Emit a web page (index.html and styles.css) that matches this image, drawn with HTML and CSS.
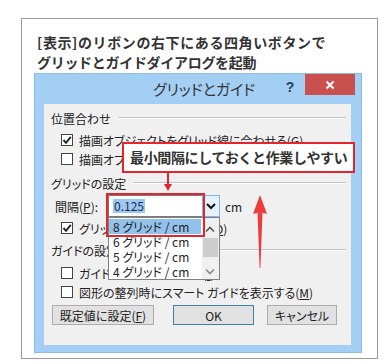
FILE: index.html
```html
<!DOCTYPE html>
<html>
<head>
  <title>グリッドとガイド</title>
  <link rel="stylesheet" href="styles.css">
</head>
<body>
  <div class="frame">
    <h1 class="lead">
      <span class="lead-1">[表示]のリボンの右下にある四角いボタンで</span>
      <span class="lead-2">グリッドとガイドダイアログを起動</span>
    </h1>

    <div class="dialog">
      <div class="titlebar">
        <span class="title">グリッドとガイド</span>
        <span class="help">?</span>
        <span class="close">
          <svg width="10" height="10" viewBox="0 0 10 10"><path d="M1.5 1.5 L8.5 8.5 M8.5 1.5 L1.5 8.5" stroke="#fff" stroke-width="2"/></svg>
        </span>
      </div>

      <div class="panel">
        <div class="group">位置合わせ</div>
        <div class="row r1"><span class="box on"><svg width="10" height="10" viewBox="0 0 10 10"><path d="M1.5 5 L4 7.8 L8.8 1.8" fill="none" stroke="#222" stroke-width="1.9"/></svg></span>描画オブジェクトをグリッド線に合わせる(<u>G</u>)</div>
        <div class="row r2"><span class="box"></span>描画オブジェクトを他のオブジェクトに合わせる(<u>O</u>)</div>

        <div class="group g2">グリッドの設定</div>
        <div class="field">
          <span class="field-label">間隔(<u>P</u>):</span>
          <div class="combo">
            <div class="combo-input"><span class="sel">0.125</span></div>
            <div class="combo-btn">
              <svg width="10" height="8" viewBox="0 0 10 8"><path d="M1 2 L5 6 L9 2" fill="none" stroke="#111" stroke-width="2"/></svg>
            </div>
            <ul class="list">
              <li class="hot">8 グリッド / cm</li>
              <li>6 グリッド / cm</li>
              <li>5 グリッド / cm</li>
              <li>4 グリッド / cm</li>
              <li class="scroll">
                <svg class="up" width="10" height="7" viewBox="0 0 10 7"><path d="M1 5.5 L5 1.5 L9 5.5" fill="none" stroke="#555" stroke-width="1.6"/></svg>
                <span class="thumb"></span>
                <svg class="down" width="10" height="7" viewBox="0 0 10 7"><path d="M1 1.5 L5 5.5 L9 1.5" fill="none" stroke="#888" stroke-width="1.6"/></svg>
              </li>
            </ul>
            <div class="mark"></div>
          </div>
          <span class="unit">cm</span>
        </div>
        <div class="row r3"><span class="box on"><svg width="10" height="10" viewBox="0 0 10 10"><path d="M1.5 5 L4 7.8 L8.8 1.8" fill="none" stroke="#222" stroke-width="1.9"/></svg></span>グリッドを画面に表示する(<u>D</u>)</div>

        <div class="group g3">ガイドの設定</div>
        <div class="row r4"><span class="box"></span>ガイドを画面に表示する(<u>I</u>)</div>
        <div class="row r5"><span class="box"></span>図形の整列時にスマート ガイドを表示する(<u>M</u>)</div>

        <div class="buttons">
          <button class="btn btn-default-set">既定値に設定(<u>F</u>)</button>
          <button class="btn btn-ok">OK</button>
          <button class="btn btn-cancel">キャンセル</button>
        </div>
      </div>
    </div>

    <!-- annotations drawn over the screenshot -->
    <div class="callout">最小間隔にしておくと作業しやすい</div>
    <svg class="arrow-down" width="10" height="19" viewBox="0 0 10 19">
      <path d="M5 0 L5 12" stroke="#e3262b" stroke-width="2"/>
      <path d="M1 11 L9 11 L5 18 Z" fill="#e3262b"/>
    </svg>
    <svg class="arrow-up" width="16" height="75" viewBox="0 0 16 75">
      <path d="M8 1 L15 20 Q8 17.5 1 20 Z" fill="#ee3b3e"/>
      <path d="M5.5 18.5 L10.5 18.5 L8.4 74 L7.6 74 Z" fill="#ee3b3e"/>
    </svg>
  </div>
</body>
</html>
```

FILE: styles.css
```css
* {
  box-sizing: border-box;
}

body {
  margin: 0;
  background: #fff;
  font-family: "Noto Sans CJK JP", "Noto Sans", sans-serif;
  color: #222;
}

.frame {
  position: relative;
  margin: 18px 0 0 21px;
  width: 357px;
  height: 341px;
  border: 1px solid #9a9a9a;
}

.lead {
  margin: 0;
  padding: 13px 0 0 15px;
  font-size: 14px;
  line-height: 20px;
  font-weight: bold;
  color: #333;
}

.lead-1,
.lead-2 {
  display: block;
  white-space: nowrap;
}

.lead-1 { letter-spacing: 0.6px; }
.lead-2 { letter-spacing: -0.3px; }

/* dialog window */
.dialog {
  margin: 1px 0 0 12px;
  width: 328px;
  height: 280px;
  background: #a3cff5;
  border: 1px solid #8bbbe6;
  display: flex;
  flex-direction: column;
}

.titlebar {
  height: 30px;
  display: flex;
  align-items: flex-start;
  flex: none;
}

.title {
  flex: 1;
  padding: 5px 0 0 118px;
  font-size: 15px;
  line-height: 20px;
  color: #333;
  font-feature-settings: "palt";
}

.help {
  width: 12px;
  margin: 3px 9px 0 0;
  font: bold 14px/20px "Liberation Sans", sans-serif;
  color: #24405e;
  text-align: center;
}

.close {
  width: 50px;
  height: 21px;
  margin-right: 6px;
  background: #c9504d;
  display: flex;
  align-items: center;
  justify-content: center;
}

.panel {
  flex: 1;
  margin: 0 10px 7px 9px;
  padding-top: 4px;
  background: #f0f0f0;
  font-size: 12px;
  font-feature-settings: "palt";
  color: #222;
}

.group {
  display: flex;
  align-items: center;
  height: 20px;
  padding-left: 7px;
  white-space: nowrap;
}

.group::after {
  content: "";
  flex: 1;
  margin: 0 5px 0 7px;
  border-top: 1px solid #c4c4c4;
  border-bottom: 1px solid #fff;
}

.g2 { margin-top: 5px; }
.g3 { margin-top: 3px; }

.row {
  display: flex;
  align-items: center;
  height: 18px;
  padding-left: 17px;
  white-space: nowrap;
}

.r1 { margin-top: 3px; }
.r2 { margin-top: 1px; }
.r3 { margin-top: 2px; }
.r4 { margin-top: 4px; }
.r5 { margin-top: 1px; }

.box {
  flex: none;
  width: 12px;
  height: 12px;
  margin-right: 6px;
  border: 1px solid #444;
  background: #fff;
  display: flex;
  align-items: center;
  justify-content: center;
}

/* spacing combo */
.field {
  display: flex;
  align-items: center;
  height: 22px;
  margin-top: 2px;
  padding-left: 11px;
}

.field-label {
  width: 53px;
  white-space: nowrap;
}

.combo {
  position: relative;
  display: flex;
  width: 112px;
  height: 22px;
}

.combo-input {
  width: 94px;
  height: 22px;
  border: 1px solid #7a7a7a;
  border-right: none;
  background: #fff;
  padding-left: 4px;
  display: flex;
  align-items: center;
}

.sel {
  background: #9fc8ef;
  color: #1a2c5a;
  line-height: 14px;
  padding: 0 1px;
}

.combo-btn {
  width: 18px;
  height: 22px;
  border: 1px solid #7eb4ea;
  background: #e5f1fb;
  display: flex;
  align-items: center;
  justify-content: center;
}

.list {
  position: absolute;
  top: 22px;
  left: 0;
  width: 112px;
  height: 63px;
  margin: 0;
  padding: 1px 18px 0 0;
  list-style: none;
  background: #fff;
  border: 1px solid #828282;
  z-index: 2;
}

.list li {
  height: 15px;
  line-height: 15px;
  padding-left: 4px;
  white-space: nowrap;
  color: #222;
}

.list li.hot {
  background: #92c1ec;
}

.list .scroll {
  position: absolute;
  top: 0;
  right: 0;
  bottom: 0;
  width: 17px;
  height: auto;
  padding: 0;
  background: #f0f0f0;
}

.scroll svg,
.scroll .thumb {
  position: absolute;
  left: 3px;
}

.scroll .up { top: 8px; }
.scroll .down { top: 50px; }

.scroll .thumb {
  left: 1px;
  top: 20px;
  width: 15px;
  height: 19px;
  background: #cdcdcd;
}

.mark {
  position: absolute;
  left: -2px;
  top: -2px;
  width: 99px;
  height: 44px;
  border: 2px solid #e3262b;
  z-index: 3;
}

.unit {
  margin-left: 5px;
}

/* buttons */
.buttons {
  display: flex;
  margin-top: 4px;
  padding-left: 8px;
}

.btn {
  height: 20px;
  padding: 0;
  font: 12px "Noto Sans CJK JP", sans-serif;
  font-feature-settings: "palt";
  color: #222;
  background: #e1e1e1;
  border: 1px solid #adadad;
}

.btn-default-set { width: 102px; }
.btn-ok { width: 81px; margin-left: 19px; border-color: #3c7fb1; }
.btn-cancel { width: 70px; margin-left: 13px; }

/* annotations */
.callout {
  position: absolute;
  left: 100px;
  top: 123px;
  width: 233px;
  height: 31px;
  padding-left: 6px;
  border: 2px solid #e3262b;
  background: #fff;
  font-size: 14px;
  font-weight: bold;
  line-height: 27px;
  letter-spacing: -0.35px;
  color: #333;
  white-space: nowrap;
  z-index: 4;
}

.arrow-down {
  position: absolute;
  left: 141px;
  top: 154px;
  z-index: 4;
}

.arrow-up {
  position: absolute;
  left: 230px;
  top: 175px;
  z-index: 4;
}
```
